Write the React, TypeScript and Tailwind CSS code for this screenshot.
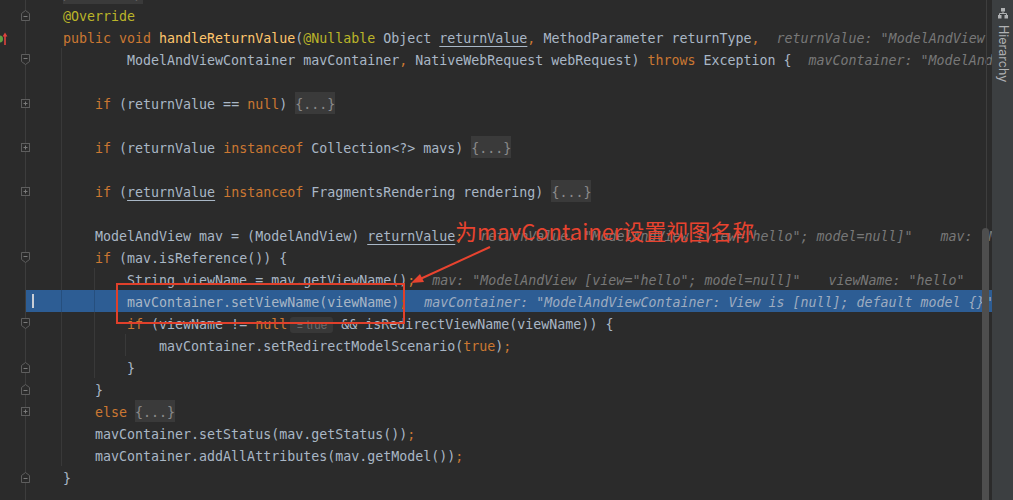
import React from 'react';

type Kind = 'k' | 't' | 'a' | 'm' | 'u' | 'h' | 'h2' | 'f' | 'b';
type Seg = [string, Kind];
type Fold = 'start' | 'end' | 'plus';

interface Row {
  segs: Seg[];
  fold?: Fold;
  hl?: boolean;
  icon?: boolean;
  guides?: number[];
}

const rows: Row[] = [
  { segs: [['/** ... */', 'f']] },
  { fold: 'end', segs: [['@Override', 'a']] },
  {
    icon: true,
    segs: [
      ['public void ', 'k'],
      ['handleReturnValue', 'm'],
      ['(', 't'],
      ['@Nullable', 'a'],
      [' Object ', 't'],
      ['returnValue', 'u'],
      [',', 'k'],
      [' MethodParameter returnType', 't'],
      [',', 'k'],
      ['returnValue: "ModelAndView [view="hello"; model=null]"', 'h'],
    ],
  },
  {
    fold: 'start',
    guides: [0],
    segs: [
      ['        ModelAndViewContainer mavContainer', 't'],
      [',', 'k'],
      [' NativeWebRequest webRequest) ', 't'],
      ['throws ', 'k'],
      ['Exception {', 't'],
      ['mavContainer: "ModelAndViewContainer: View is [null]; default model {}"', 'h'],
    ],
  },
  { guides: [0], segs: [] },
  {
    fold: 'plus',
    guides: [0],
    segs: [
      ['    ', 't'],
      ['if', 'k'],
      [' (returnValue == ', 't'],
      ['null', 'k'],
      [') ', 't'],
      ['{...}', 'f'],
    ],
  },
  { guides: [0], segs: [] },
  {
    fold: 'plus',
    guides: [0],
    segs: [
      ['    ', 't'],
      ['if', 'k'],
      [' (returnValue ', 't'],
      ['instanceof', 'k'],
      [' Collection<?> mavs) ', 't'],
      ['{...}', 'f'],
    ],
  },
  { guides: [0], segs: [] },
  {
    fold: 'plus',
    guides: [0],
    segs: [
      ['    ', 't'],
      ['if', 'k'],
      [' (', 't'],
      ['returnValue', 'u'],
      [' ', 't'],
      ['instanceof', 'k'],
      [' FragmentsRendering rendering) ', 't'],
      ['{...}', 'f'],
    ],
  },
  { guides: [0], segs: [] },
  {
    guides: [0],
    segs: [
      ['    ModelAndView mav = (ModelAndView) ', 't'],
      ['returnValue', 'u'],
      [';', 'k'],
      ['returnValue: "ModelAndView [view="hello"; model=null]"', 'h'],
      ['mav: "ModelAndView [view="hello"; model=null]"', 'h2'],
    ],
  },
  {
    fold: 'start',
    guides: [0],
    segs: [
      ['    ', 't'],
      ['if', 'k'],
      [' (mav.isReference()) {', 't'],
    ],
  },
  {
    guides: [0, 1],
    segs: [
      ['        String viewName = mav.getViewName()', 't'],
      [';', 'k'],
      ['mav: "ModelAndView [view="hello"; model=null]"', 'h'],
      ['viewName: "hello"', 'h2'],
    ],
  },
  {
    hl: true,
    guides: [0, 1],
    segs: [
      ['        mavContainer.setViewName(viewName)', 't'],
      [';', 'k'],
      ['mavContainer: "ModelAndViewContainer: View is [null]; default model {}"', 'h'],
    ],
  },
  {
    fold: 'start',
    guides: [0, 1],
    segs: [
      ['        ', 't'],
      ['if', 'k'],
      [' (viewName != ', 't'],
      ['null', 'k'],
      ['= true', 'b'],
      [' && isRedirectViewName(viewName)) {', 't'],
    ],
  },
  {
    guides: [0, 1, 2],
    segs: [
      ['            mavContainer.setRedirectModelScenario(', 't'],
      ['true', 'k'],
      [')', 't'],
      [';', 'k'],
    ],
  },
  { fold: 'end', guides: [0, 1], segs: [['        }', 't']] },
  { fold: 'end', guides: [0], segs: [['    }', 't']] },
  {
    fold: 'plus',
    guides: [0],
    segs: [
      ['    ', 't'],
      ['else', 'k'],
      [' ', 't'],
      ['{...}', 'f'],
    ],
  },
  {
    guides: [0],
    segs: [
      ['    mavContainer.setStatus(mav.getStatus())', 't'],
      [';', 'k'],
    ],
  },
  {
    guides: [0],
    segs: [
      ['    mavContainer.addAllAttributes(mav.getModel())', 't'],
      [';', 'k'],
    ],
  },
  { fold: 'end', segs: [['}', 't']] },
  { segs: [] },
];

const guideClass = ['left-[61px]', 'left-[94px]', 'left-[125px]'];

function FoldMark({ kind }: { kind: Fold }) {
  return (
    <svg className="absolute left-[-6px] top-[5px]" width="11" height="13" viewBox="0 0 11 13">
      {kind === 'start' && (
        <path d="M1.5 1.5 H9.5 V8.5 L5.5 11.5 L1.5 8.5 Z" fill="#2b2b2b" stroke="#5e5e5e" />
      )}
      {kind === 'end' && (
        <path d="M1.5 11.5 H9.5 V4.5 L5.5 1.5 L1.5 4.5 Z" fill="#2b2b2b" stroke="#5e5e5e" />
      )}
      {kind === 'plus' && <rect x="1.5" y="2.5" width="8" height="8" fill="#2b2b2b" stroke="#5e5e5e" />}
      <path d={kind === 'start' ? 'M3.5 5.5 H7.5' : kind === 'end' ? 'M3.5 7.5 H7.5' : 'M3.5 6.5 H7.5'} stroke="#7a7a7a" />
      {kind === 'plus' && <path d="M5.5 4.5 V8.5" stroke="#7a7a7a" />}
    </svg>
  );
}

function OverrideIcon() {
  return (
    <svg className="absolute left-[-3px] top-[3px]" width="12" height="17" viewBox="0 0 12 17">
      <circle cx="2.5" cy="10" r="3.5" fill="#5fa043" />
      <path d="M8 16 V5" stroke="#e0443e" strokeWidth="1.6" />
      <path d="M5.6 7.5 L8 3.5 L10.4 7.5 Z" fill="#e0443e" />
    </svg>
  );
}

function Segment({ seg, hl }: { seg: Seg; hl?: boolean }) {
  const [text, kind] = seg;
  switch (kind) {
    case 'k':
      return <span className="text-[#cc7832]">{text}</span>;
    case 'a':
      return <span className="text-[#bbb529]">{text}</span>;
    case 'm':
      return <span className="text-[#ffc66d]">{text}</span>;
    case 'u':
      return <span className="text-[#a9b7c6] underline decoration-[#a9b7c6] underline-offset-[3px]">{text}</span>;
    case 'h':
      return <span className={`ml-[17px] italic ${hl ? 'text-[#9eacc0]' : 'text-[#787878]'}`}>{text}</span>;
    case 'h2':
      return <span className="ml-[28px] italic text-[#787878]">{text}</span>;
    case 'f':
      return (
        <span className="inline-block h-[22px] bg-[#3a3a3a] align-top leading-[25px] text-[#8a8a8a]">{text}</span>
      );
    case 'b':
      return (
        <span className="ml-[3px] inline-block h-[16px] rounded-[3px] bg-[#383838] px-[6px] align-middle font-['Inter',sans-serif] text-[11px] leading-[16px] text-[#6c6c6c]">
          {text}
        </span>
      );
    default:
      return <span className="text-[#a9b7c6]">{text}</span>;
  }
}

function Line({ row }: { row: Row }) {
  return (
    <div className="relative flex h-[22px] shrink-0">
      <div className="relative w-[25px] shrink-0">{row.icon && <OverrideIcon />}</div>
      <div className={`flex min-w-0 flex-1 ${row.hl ? 'bg-[#2d5d94]' : ''}`}>
        <div className="relative w-[38px] shrink-0 border-l border-[#3d3d3d]">
          {row.fold && <FoldMark kind={row.fold} />}
          {row.hl && <div className="absolute left-[6px] top-[4px] h-[14px] w-[2px] bg-[#c9ced6]" />}
        </div>
        <div className="h-[22px] whitespace-pre leading-[25px]">
          {row.segs.map((s, i) => (
            <Segment key={i} seg={s} hl={row.hl} />
          ))}
        </div>
      </div>
      {row.guides?.map((g) => (
        <div
          key={g}
          className={`absolute top-0 h-full w-px ${guideClass[g]} ${row.hl ? 'bg-[#264f7e]' : 'bg-[#393939]'}`}
        />
      ))}
    </div>
  );
}

export default function App() {
  return (
    <div className="flex h-[500px] w-[1013px] overflow-hidden bg-[#2b2b2b] font-['DejaVu_Sans_Mono',monospace] text-[13.3px]">
      <div className="relative min-w-0 flex-1 overflow-hidden">
        <div className="-mt-[18px] flex flex-col">
          {rows.map((r, i) => (
            <Line key={i} row={r} />
          ))}
        </div>

        {/* scrollbar */}
        <div className="absolute left-[986px] top-0 h-full w-px bg-[#3e3e3e]" />
        <div className="absolute bottom-0 left-[982px] top-[228px] w-[7px] rounded-t-full bg-[#4e4e4e]" />

        {/* annotation */}
        <div className="absolute left-[455px] top-[219px] whitespace-nowrap font-['Noto_Sans_CJK_SC',sans-serif] text-[22px] leading-none text-[#e8432f]">
          为mavContainer设置视图名称
        </div>
        <svg className="absolute left-[400px] top-[240px]" width="100" height="50" viewBox="0 0 100 50">
          <path d="M90 7 L18 40" stroke="#e8432f" strokeWidth="2" />
          <path d="M11 43 L20 34 L24 42 Z" fill="#e8432f" />
        </svg>
        <div className="absolute left-[116px] top-[283px] h-[41px] w-[289px] border-2 border-[#e0402b]" />
      </div>

      <div className="flex w-[21px] shrink-0 flex-col items-center bg-[#3c3f41] pt-[8px]">
        <svg width="10" height="11" viewBox="0 0 10 11">
          <rect x="3" y="0" width="4" height="3.5" fill="#afb1b3" />
          <path d="M5 3.5 V5.5 M1.5 5.5 H8.5 M1.5 5.5 V7 M8.5 5.5 V7" stroke="#afb1b3" />
          <rect x="0" y="7" width="3.5" height="3.5" fill="#afb1b3" />
          <rect x="6.5" y="7" width="3.5" height="3.5" fill="#afb1b3" />
        </svg>
        <span className="mt-[6px] font-['Inter',sans-serif] text-[12.5px] leading-none text-[#afb1b3] [writing-mode:vertical-rl]">
          Hierarchy
        </span>
      </div>
    </div>
  );
}
